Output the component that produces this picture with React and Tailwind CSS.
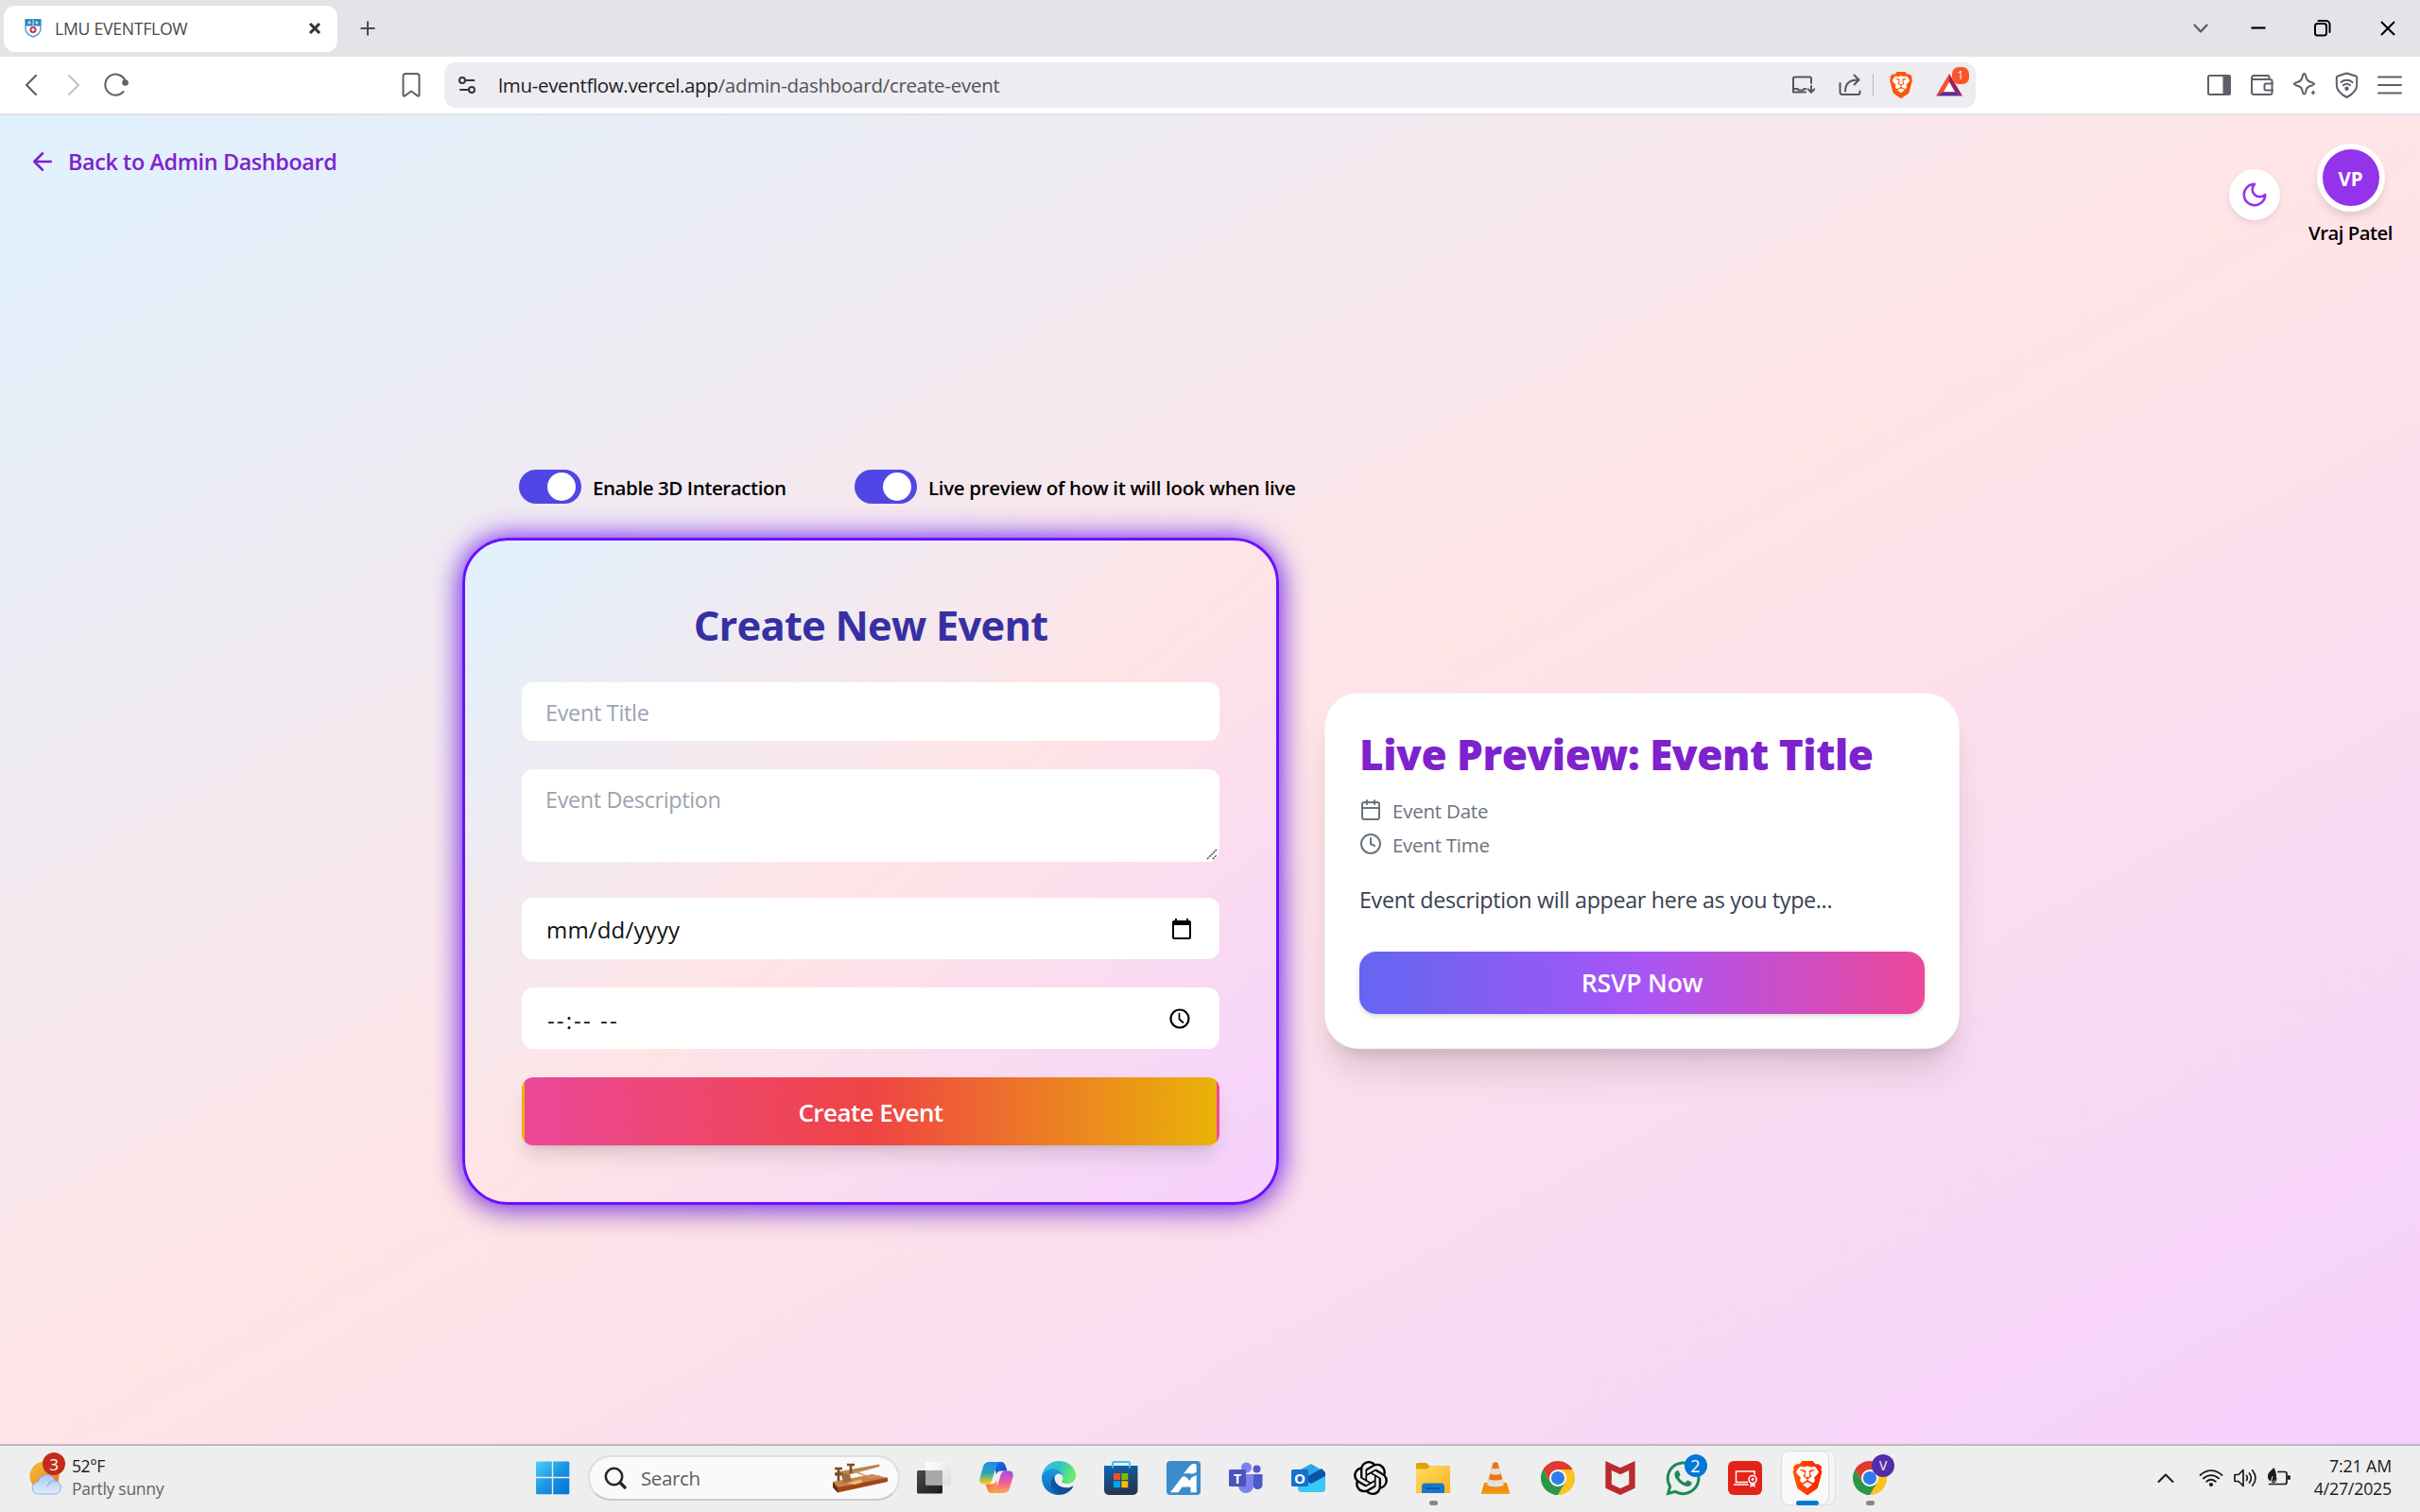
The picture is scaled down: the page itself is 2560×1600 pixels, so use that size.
import { SiBrave, SiOpenai, SiMcafee } from "react-icons/si";
import { FaWhatsapp } from "react-icons/fa";

function Svg({ w, h = w, vb, className = "", children }) {
  return (
    <svg width={w} height={h} viewBox={vb || `0 0 ${w} ${h}`} fill="none" className={`shrink-0 ${className}`}>
      {children}
    </svg>
  );
}

function Line({ w, h = w, vb, sw = 2, className = "", children }) {
  return (
    <svg width={w} height={h} viewBox={vb || `0 0 ${w} ${h}`} fill="none" stroke="currentColor" strokeWidth={sw} strokeLinecap="round" strokeLinejoin="round" className={`shrink-0 ${className}`}>
      {children}
    </svg>
  );
}

function BraveLion({ size, id, tile }) {
  return (
    <Svg w={size} vb="0 0 24 24">
      <defs>
        <linearGradient id={id} x1="0" y1="0" x2="1" y2="0">
          <stop offset="0" stopColor={tile ? "#ff5500" : "#fb5a12"} />
          <stop offset="1" stopColor={tile ? "#ff2000" : "#ff5000"} />
        </linearGradient>
      </defs>
      <path d="M5 5.5h14l-1 11-6 4.500-6-4.500z" fill="#fff" />
      <g fill={`url(#${id})`}>
        <SiBrave size={24} fill={`url(#${id})`} />
      </g>
    </Svg>
  );
}

function TitleBar() {
  return (
    <div className="flex h-[60px] items-center bg-[#e4e3e8] pl-[4px]">
      <div className="flex h-[49px] w-[353px] items-center rounded-[12px] bg-white pl-[22px]">
        <Svg w={18} h={20}>
          <path d="M1 .8h16v10c0 4-3.500 6.500-8 8.400C4.500 17.300 1 14.800 1 10.800z" fill="#fff" stroke="#4a9cc9" strokeWidth="1.400" />
          <path d="M1 .8h16v6.700H1z" fill="#2b86bd" />
          <path d="M5 2v4M3 4h4M12.800 2v4M10.800 4h4M9 1v6.500" stroke="#d9ecf7" strokeWidth="1" />
          <circle cx="9" cy="11.500" r="2.600" stroke="#cc2740" strokeWidth="1.800" />
        </Svg>
        <div className="ml-[14px] w-[268px] text-[17.6px] leading-[24px] tracking-[-0.0142em] text-[#46474c]">LMU EVENTFLOW</div>
        <Line w={14} sw={3} className="text-[#333438]"><path d="M2 2l10 10M12 2L2 12" strokeLinecap="butt" /></Line>
      </div>
      <Line w={18} sw={2} className="ml-[23px] text-[#4a4b50]"><path d="M9 1.500v15M1.500 9h15" strokeLinecap="butt" /></Line>
      <div className="ml-auto flex items-center pr-[24px] text-black">
        <Line w={18} h={12} sw={2.200} className="text-[#5a5c61]"><path d="M2.500 2.500l6.500 7 6.500-7" /></Line>
        <Line w={18} h={18} sw={2.200} className="ml-[43px] mr-[49px]"><path d="M1.500 8.500h15" strokeLinecap="butt" /></Line>
        <Line w={20} sw={2}><rect x="2" y="5" width="12" height="12.500" rx="2.500" /><path d="M5.500 2h8a4 4 0 0 1 4 4v8" /></Line>
        <Line w={20} sw={2} className="ml-[49px]"><path d="M3 3l14 14M17 3L3 17" strokeLinecap="butt" /></Line>
      </div>
    </div>
  );
}

function Toolbar() {
  return (
    <div className="flex h-[62px] items-center border-b-2 border-[#e2e1e6] bg-white text-[#5d6067]">
      <Line w={16} h={26} sw={2.200} className="ml-[25px]"><path d="M13 3L3 13l10 10" /></Line>
      <Line w={16} h={26} sw={2.200} className="ml-[29px] text-[#c3c4c8]"><path d="M3 3l10 10L3 23" /></Line>
      <Line w={30} sw={2} className="ml-[22px]">
        <path d="M24.500 10.500A11 11 0 1 0 22.500 22" />
        <circle cx="24.500" cy="12.500" r="2.300" fill="currentColor" />
      </Line>
      <Line w={22} h={28} sw={2} className="ml-[286px]"><path d="M5 2h12a2.500 2.500 0 0 1 2.500 2.500v20c0 1-1 1.500-1.800.9L11 20.500l-6.700 4.900c-.8.600-1.800.100-1.800-.9v-20A2.500 2.500 0 0 1 5 2z" /></Line>

      <div className="ml-[24px] flex h-[48px] w-[1620px] items-center rounded-[12px] bg-[#edecf1]">
        <Line w={20} h={20} sw={2} className="ml-[14px] text-[#33343a]">
          <circle cx="5" cy="5" r="3" /><path d="M9.500 5h8" /><circle cx="15" cy="15" r="3" /><path d="M3 15h8" />
        </Line>
        <div className="ml-[23px] text-[20.5px] leading-[30px] text-[#51525a]">
          <span className="tracking-[-0.0165em] text-[#1b1b22]">lmu-eventflow.vercel.app</span>
          <span className="tracking-[-0.0125em]">/admin-dashboard/create-event</span>
        </div>
        <div className="ml-auto flex items-center pr-[7px] text-[#55575e]">
          <Line w={28} h={24} sw={2}>
            <path d="M23 10V5a1.500 1.500 0 0 0-1.500-1.500h-16A1.500 1.500 0 0 0 4 5v14.500h13" />
            <path d="M4 16h4.500l1.500 1.500h4l1.500-1.500h2M23 13v6.500M19.800 16.500l3.200 3.200 3.200-3.200" />
          </Line>
          <Line w={28} h={28} sw={2} className="ml-[22px]">
            <path d="M3.500 12v9.500a2.500 2.500 0 0 0 2.500 2.500h16.500a2 2 0 0 0 2-2v-1.500" />
            <path d="M9 20.500c0-7.500 4-12 13.500-12M18.500 3.500l5 5-5 5" />
          </Line>
          <div className="ml-[10px] h-[24px] w-[1.5px] bg-[#b9b9c0]" />
          <div className="ml-[15px]"><BraveLion size={28} id="lionBar" /></div>
          <div className="relative ml-[22px] mr-[6px]">
            <Svg w={30} h={26}>
              <path d="M15 1L1 24.500l8-4L15 10z" fill="#ff4b2a" />
              <path d="M15 1l14 23.500-8-4L15 10z" fill="#9e1f63" />
              <path d="M1 24.500h28l-8-4.500H9z" fill="#5f2d91" />
              <path d="M15 10l6 10.300H9z" fill="#fff" />
            </Svg>
            <div className="absolute left-[18px] top-[-6px] flex h-[18px] w-[18px] items-center justify-center rounded-[7px] bg-[#fb542b] text-[12px] leading-none text-white">1</div>
          </div>
        </div>
      </div>

      <div className="ml-auto flex items-center gap-[15px] pr-[17px]">
        <Line w={30} h={28} sw={2}><rect x="3" y="4" width="23" height="20" rx="1.500" /><path d="M19.500 4.500h6v19h-6z" fill="currentColor" /></Line>
        <Line w={30} h={28} sw={2}>
          <path d="M4 7v14.500A2.500 2.500 0 0 0 6.500 24h17a2 2 0 0 0 2-2V10a2 2 0 0 0-2-2H5.500A1.500 1.500 0 0 1 4 6.500 2.500 2.500 0 0 1 6.500 4H21a1.500 1.500 0 0 1 1.500 1.500V8" />
          <path d="M26 12.500h-7a1.500 1.500 0 0 0-1.500 1.500v4a1.500 1.500 0 0 0 1.500 1.500h7" />
        </Line>
        <Line w={30} h={30} sw={2}>
          <path d="M14.500 3c.9 0 1.200.7 1.400 1.500.9 4.900 2.100 6.500 7.100 7.900 1 .300 2.100.600 2.100 1.400s-1.200 1.100-2.100 1.400c-5 1.400-6.200 2.900-7.100 7.800-.2.900-.5 1.500-1.400 1.500s-1.200-.6-1.400-1.500c-.9-4.900-2.100-6.400-7.100-7.800-1-.3-2.100-.6-2.100-1.400s1.200-1.100 2.100-1.400c5-1.400 6.200-3 7.100-7.900.2-.8.5-1.500 1.400-1.500z" />
          <path d="M24 18.500l1.400 3.100 3.100 1.400-3.100 1.400-1.400 3.100-1.400-3.100-3.100-1.400 3.100-1.400z" fill="currentColor" strokeWidth="1.200" stroke="#fff" />
        </Line>
        <Line w={30} h={30} sw={2}>
          <path d="M14.500 2.500l9.500 3c.8.300 1.200.8 1.200 1.500v8c0 5.500-4 9.500-10.700 13C7.800 24.500 3.800 20.500 3.800 15V7c0-.700.400-1.200 1.200-1.500z" />
          <path d="M8.500 12c3.500-3 8.500-3 12 0M10.800 15.300c2.300-1.900 5-1.900 7.400 0" /><circle cx="14.500" cy="18.800" r="1.200" fill="currentColor" />
        </Line>
        <Line w={30} h={24} sw={2}><path d="M3 3.500h24M3 12h24M3 20.500h24" /></Line>
      </div>
    </div>
  );
}

function PageHeader() {
  return (
    <header className="flex h-[139px] items-start justify-between pl-[30px] pr-[28px] pt-[30px]">
      <div className="flex h-[38px] items-center text-[#7e22ce]">
        <Line w={30} vb="0 0 24 24"><path d="M12 19l-7-7 7-7M19 12H5" /></Line>
        <div className="ml-[12px] text-[23.3px] font-semibold leading-[36px] tracking-[-0.015em]">Back to Admin Dashboard</div>
      </div>
      <div className="flex items-center gap-[29px]">
        <div className="mb-[2px] flex h-[54px] w-[54px] items-center justify-center rounded-full bg-white text-[#9333ea] shadow-[0_3px_6px_rgba(0,0,0,0.09)]">
          <Line w={30} vb="0 0 24 24"><path d="M12 3a6 6 0 0 0 9 9 9 9 0 1 1-9-9Z" /></Line>
        </div>
        <div className="flex w-[91px] flex-col items-center">
          <div className="flex h-[72px] w-[72px] items-center justify-center rounded-full border-6 border-white bg-[#9333ea] pt-[2px] text-[20.5px] font-bold leading-none text-white shadow-[0_6px_9px_-1px_rgba(0,0,0,0.12)]">VP</div>
          <div className="mt-[7px] whitespace-nowrap text-[20.3px] font-semibold leading-[30px] tracking-[-0.023em] text-black">Vraj Patel</div>
        </div>
      </div>
    </header>
  );
}

function Toggle({ label, className, labelClass }) {
  return (
    <div className={`flex items-center ${className}`}>
      <div className="flex h-[36px] w-[66px] items-center justify-end rounded-full bg-[#4f46e5] pr-[6px]">
        <div className="h-[30px] w-[30px] rounded-full bg-white" />
      </div>
      <div className={`ml-[12px] whitespace-nowrap pt-[1px] text-[20.5px] font-semibold leading-[30px] text-black ${labelClass}`}>{label}</div>
    </div>
  );
}

function EventForm() {
  return (
    <form className="h-[706px] w-[864px] rounded-[48px] border-3 border-[#6a11ff] bg-[linear-gradient(to_bottom_right,#e0f2fe,#ffe4e6,#f5d0fe)] bg-origin-border p-[60px] shadow-[0_0_30px_#6a11fb,0_12px_30px_rgba(0,0,0,0.14)]">
      <h1 className="mb-[32px] h-[58px] pt-[1px] text-center text-[43.5px] font-bold leading-[57px] tracking-[-0.018em] text-[#3730a3]">Create New Event</h1>
      <input placeholder="Event Title" className="block h-[62px] w-full rounded-[12px] bg-white pl-[25px] pr-[24px] pt-[1px] text-[23.4px] tracking-[-0.0125em] placeholder:text-[#9ca3af]" />
      <div className="relative mt-[30px] h-[98px]">
        <textarea placeholder="Event Description" className="block h-full w-full resize-none rounded-[12px] bg-white pl-[25px] pr-[24px] pt-[14px] text-[23.4px] leading-[36px] tracking-[-0.015em] placeholder:text-[#9ca3af]" />
        <Line w={14} sw={1.400} className="absolute bottom-[1px] right-[1px] text-[#44464c]"><path d="M2 12L12 2M8 12l4-4" strokeDasharray="2.200 .8" strokeLinecap="butt" /></Line>
      </div>
      <div className="mt-[38px] flex h-[65px] items-center justify-between rounded-[12px] bg-white pl-[26px] pr-[28px] text-[24px] text-[#111]">
        <div className="pt-[2px] leading-[36px] tracking-[0.007em]">mm/dd/yyyy</div>
        <Svg w={24} vb="0 0 24 24" className="text-black"><path fill="currentColor" d="M20 3h-1V1h-2v2H7V1H5v2H4c-1.100 0-2 .9-2 2v16c0 1.100.9 2 2 2h16c1.100 0 2-.9 2-2V5c0-1.100-.9-2-2-2zm0 18H4V8h16v13z" /></Svg>
      </div>
      <div className="mt-[30px] flex h-[65px] items-center justify-between rounded-[12px] bg-white pl-[27px] pr-[30px] text-[24px] text-[#111]">
        <div className="pt-[4px] leading-[36px] tracking-[0.088em]">--:-- --</div>
        <Line w={24} sw={2.200} className="text-black"><circle cx="12" cy="12" r="9.500" /><path d="M11.500 6.500v6l4 3.500" strokeWidth="1.700" /></Line>
      </div>
      <button type="button" className="mt-[30px] block h-[72px] w-full rounded-[12px] border-3 border-transparent bg-[linear-gradient(to_right,#ec4899,#ef4444,#eab308)] pt-[2px] text-center text-[26px] font-semibold leading-[64px] tracking-[-0.022em] text-white shadow-[0_15px_22px_-4px_rgba(0,0,0,0.12),0_6px_9px_-6px_rgba(0,0,0,0.12)]">Create Event</button>
    </form>
  );
}

function Preview() {
  return (
    <section className="mb-[2px] flex h-[377px] w-[672px] flex-col rounded-[36px] border-[1.5px] border-[#f3f4f6] bg-white px-[36px] pt-[36px] shadow-[0_30px_37px_-7px_rgba(0,0,0,0.12),0_12px_15px_-9px_rgba(0,0,0,0.12)]">
      <h2 className="whitespace-nowrap pt-[1px] text-[44px] font-extrabold leading-[54px] tracking-[-0.0105em] text-[#7e22ce]">Live Preview: Event Title</h2>
      <div className="mt-[17px] flex h-[30px] items-center gap-[11px] text-[#6b7280]">
        <Line w={24} vb="0 0 24 24"><path d="M8 2v4M16 2v4M3 10h18" /><rect x="3" y="4" width="18" height="18" rx="2" /></Line>
        <div className="pt-[3px] text-[20.5px] leading-[30px] tracking-[-0.011em]">Event Date</div>
      </div>
      <div className="mt-[6px] flex h-[30px] items-center gap-[11px] text-[#6b7280]">
        <Line w={24} vb="0 0 24 24"><circle cx="12" cy="12" r="10" /><path d="M12 6v6l4 2" /></Line>
        <div className="pt-[3px] text-[20.5px] leading-[30px] tracking-[-0.013em]">Event Time</div>
      </div>
      <p className="mt-[26px] whitespace-nowrap text-[23.3px] leading-[36px] tracking-[-0.0145em] text-[#374151]">Event description will appear here as you type...</p>
      <button type="button" className="mt-[37px] h-[66px] shrink-0 rounded-[18px] bg-[linear-gradient(to_right,#6366f1,#a855f7,#ec4899)] pt-[2px] text-[26.6px] font-semibold tracking-[-0.008em] text-white shadow-[0_2px_5px_rgba(0,0,0,0.16)]">RSVP Now</button>
    </section>
  );
}

function Cell({ children, running, active }) {
  return (
    <div className="relative flex h-[58px] w-[66px] items-center justify-center">
      {active && <div className="absolute left-[12px] top-0 h-[58px] w-[51px] rounded-[8px] border border-[#dfdfdf] bg-[#f4f4f4]" />}
      {active && <div className="absolute left-[5px] top-0 h-[58px] w-[51px] rounded-[8px] border border-[#dcdcdc] bg-[#f9f9f9]" />}
      <div className="relative">{children}</div>
      {running && <div className="absolute bottom-0 h-[5px] w-[9px] rounded-full bg-[#868686]" />}
      {active && <div className="absolute bottom-0 left-[21px] h-[5px] w-[24px] rounded-full bg-[#0078d7]" />}
    </div>
  );
}

function Chrome() {
  return (
    <Svg w={36} vb="0 0 48 48">
      <path d="M24 12H44.780A24 24 0 0 0 3.220 12L13.610 30 24 24Z" fill="#df3a30" />
      <path d="M24 12H44.780A24 24 0 0 1 24 48L34.390 30 24 24Z" fill="#fdc31c" />
      <path d="M13.610 30 3.220 12A24 24 0 0 0 24 48L34.390 30 24 24Z" fill="#2b9746" />
      <circle cx="24" cy="24" r="12" fill="#fff" />
      <circle cx="24" cy="24" r="9.500" fill="#2f7ded" />
    </Svg>
  );
}

function Gradient({ id, from, mid, to, x2 = 1, y2 = 1 }) {
  return (
    <linearGradient id={id} x1="0" y1="0" x2={x2} y2={y2}>
      <stop offset="0" stopColor={from} />
      {mid && <stop offset=".5" stopColor={mid} />}
      <stop offset="1" stopColor={to} />
    </linearGradient>
  );
}

function WeatherWidget() {
  return (
    <div className="flex w-[567px] items-center pl-[31px]">
      <div className="relative">
        <Svg w={36} h={36}>
          <defs>
            <Gradient id="sun" from="#eec33a" mid="#f09a2a" to="#f2650c" />
            <Gradient id="cloud" from="#a9c7f5" mid="#c4daf8" to="#e2eefb" x2={0} />
          </defs>
          <circle cx="16" cy="16" r="15.500" fill="url(#sun)" />
          <path d="M10 35a6.500 6.500 0 0 1-.8-13 9.500 9.500 0 0 1 18.300-1A7.200 7.200 0 0 1 28 35z" fill="url(#cloud)" stroke="#7ba0e4" strokeWidth=".8" />
          <path d="M19 27a8 8 0 0 1 9-6" stroke="#8fb0ea" strokeWidth="1.200" />
        </Svg>
        <div className="absolute left-[14px] top-[-9px] flex h-[24px] w-[24px] items-center justify-center rounded-full bg-[#c42b1c] text-[17px] leading-none text-white">3</div>
      </div>
      <div className="mb-[2px] ml-[9px]">
        <div className="text-[17.5px] leading-[24px] tracking-[-0.025em] text-[#1b1b1b]">52°F</div>
        <div className="text-[17.5px] leading-[24px] tracking-[-0.0165em] text-[#636363]">Partly sunny</div>
      </div>
    </div>
  );
}

function SearchBox() {
  return (
    <div className="ml-[19px] mr-[3px] flex h-[48px] w-[330px] items-center rounded-full border-2 border-[#dedede] border-b-[#c9c9c9] bg-[#fafafa] pl-[15px]">
      <Line w={24} sw={2.600} className="text-[#262626]"><circle cx="10.500" cy="10.500" r="8.700" /><path d="M17 17l5 5" strokeWidth="3.200" /></Line>
      <div className="ml-[15px] text-[20.5px] leading-[30px] tracking-[-0.018em] text-[#5d5d5d]">Search</div>
      <Svg w={60} h={32} className="ml-auto mr-[10px]">
        <path d="M1 20l42-8 16 4-53 11z" fill="#c98348" />
        <path d="M1 20l5 6v5.500L1 26z" fill="#6e2410" />
        <path d="M6 26l53-10.500v4.500L6 31.500z" fill="#a4441c" />
        <path d="M16 21.500l14-4 3 3-9 2.500z" fill="#e8bd74" />
        <path d="M3 10L50 1.500l.5 2.500L20 12 4 14z" fill="#b98350" />
        <path d="M3 6h8M16 2h8M7 6v13M20 3v8M3 12h9" stroke="#7b4b27" strokeWidth="2.600" />
        <path d="M10 12h9l2 8-9 1z" fill="#a06c3c" />
        <path d="M24 9l15 6 12-1" stroke="#c99a5c" strokeWidth="1.500" />
      </Svg>
    </div>
  );
}

function Taskbar() {
  return (
    <footer className="flex h-[72px] items-center border-t-2 border-[#bdbabd] bg-[#eeeeee] pb-[2px]">
      <WeatherWidget />
      <Svg w={36}>
        <defs><linearGradient id="win" gradientUnits="userSpaceOnUse" x1="0" y1="0" x2="36" y2="36"><stop offset="0" stopColor="#4fd0ff" /><stop offset=".5" stopColor="#1a94e0" /><stop offset="1" stopColor="#0072d0" /></linearGradient></defs>
        <path d="M1 .5h15.800v16.300H0V1.500zM18.200.5H34.500l.8 1v15.300H18.200zM0 18.300h16.800v17H1l-1-1zM18.200 18.300h17.100v16l-1 1H18.200z" fill="url(#win)" />
      </Svg>
      <SearchBox />

      <Cell>
        <Svg w={36}>
          <defs><Gradient id="tvd" from="#4a4a4a" to="#1b1b1b" /><Gradient id="tvl" from="#ffffff" to="#dcdcdc" /></defs>
          <rect x="0" y="10" width="27" height="24.500" rx="1.500" fill="url(#tvd)" />
          <rect x="9" y="1" width="27" height="24.500" rx="1.500" fill="url(#tvl)" />
          <path d="M9 10h18v15.500H10.500L9 24z" fill="#a9a9a9" />
        </Svg>
      </Cell>
      <Cell>
        <Svg w={36}>
          <defs>
            <Gradient id="cpa" from="#1d8cf0" mid="#2aa5b8" to="#ffd30f" x2={0} />
            <Gradient id="cpb" from="#a14df0" mid="#ef5a9a" to="#ffab4c" x2={0} />
            <Gradient id="cpc" from="#1e7cf2" to="#1338b8" />
            <Gradient id="cpd" from="#ff5b3a" to="#ffb04a" />
          </defs>
          <path d="M15 1h8c3 0 4 2 5 5l1.500 4.500H23c-3 0-4 1-5 4z" fill="url(#cpc)" />
          <path d="M21 34h-8c-3 0-4-2-5-5l-1.500-4.500H13c3 0 4-1 5-4z" fill="url(#cpd)" />
          <path d="M11 1h11c-3 0-3.500 3-4.500 6l-4 13c-1 3-2.500 4.500-5.500 4.500H4.500C1 24.500-.5 22 .5 18L4 6c1-3.500 3.500-5 7-5z" fill="url(#cpa)" />
          <path d="M25 34H14c3 0 3.500-3 4.500-6l4-13c1-3 2.500-4.500 5.500-4.500h3.500c3.500 0 5 2.500 4 6.500L32 29c-1 3.500-3.500 5-7 5z" fill="url(#cpb)" />
        </Svg>
      </Cell>
      <Cell>
        <Svg w={36} vb="0 0 256 256">
          <defs>
            <Gradient id="ed1" from="#0c59a4" to="#114a8b" x2={1} y2={0} />
            <Gradient id="ed2" from="#1b9de2" to="#0a66c0" x2={0} />
            <Gradient id="ed3" from="#35c1f1" mid="#2fc2c9" to="#66eb6e" x2={1} y2={.35} />
          </defs>
          <path fill="url(#ed1)" d="M230.960 190.050a93.910 93.910 0 0 1-10.540 4.710 101.870 101.870 0 0 1-35.900 6.460c-47.320 0-88.540-32.550-88.540-74.320A31.480 31.480 0 0 1 112.410 99.630c-42.800 1.800-53.800 46.400-53.800 72.530 0 73.880 68.090 81.370 82.760 81.370 7.910 0 19.840-2.300 27-4.560l1.310-.44a128.340 128.340 0 0 0 66.600-52.800 4 4 0 0 0-5.320-5.680z" />
          <path fill="url(#ed2)" d="M105.730 241.420a79.200 79.200 0 0 1-22.740-21.340 80.720 80.720 0 0 1 29.530-120c3.120-1.470 8.450-4.130 15.540-4a32.350 32.350 0 0 1 25.690 13 31.880 31.880 0 0 1 6.360 18.660c0-.21 24.460-79.600-80-79.600-43.900 0-80 41.660-80 78.210a130.150 130.150 0 0 0 12.110 56 128 128 0 0 0 156.380 67.110 75.550 75.550 0 0 1-62.780-8z" />
          <path fill="url(#ed3)" d="M152.330 148.860c-.81 1.050-3.300 2.500-3.300 5.660 0 2.610 1.700 5.120 4.720 7.230 14.380 10 41.490 8.680 41.560 8.680a59.560 59.560 0 0 0 30.270-8.350 61.380 61.380 0 0 0 30.430-52.880c.26-22.410-8-37.310-11.340-43.910C223.460 23.840 177.720 0 128 0A128 128 0 0 0 0 126.200c.48-36.540 36.800-66.050 80-66.050 3.500 0 23.460.34 42 10.070 16.340 8.580 24.900 18.940 30.850 29.210 6.180 10.670 7.280 24.150 7.280 29.520 0 5.370-2.740 13.330-7.800 19.900z" />
        </Svg>
      </Cell>
      <Cell>
        <Svg w={36}>
          <defs><Gradient id="store" from="#0f68b4" to="#273452" x2={0.3} /></defs>
          <path d="M0 5h35.500v26a5 5 0 0 1-5 5H5a5 5 0 0 1-5-5z" fill="url(#store)" />
          <path d="M9 7.500V2.500A1.500 1.500 0 0 1 10.500 1h15A1.500 1.500 0 0 1 27 2.500v5" stroke="#35c5fb" strokeWidth="2" />
          <path d="M10 13h7v7h-7z" fill="#f25022" /><path d="M18.300 13h7v7h-7z" fill="#7fba00" />
          <path d="M10 21.200h7v7h-7z" fill="#00a4ef" /><path d="M18.300 21.200h7v7h-7z" fill="#ffb900" />
        </Svg>
      </Cell>
      <Cell>
        <Svg w={36}>
          <rect width="36" height="36" rx="4" fill="#3b8ccb" />
          <path d="M18 13.500L24.500 5.200Q26.500 3 29 3h1a1.700 1.700 0 0 1 1.700 1.700V12l-4.700 1.800q-4-1.500-9-.3z" fill="#fff" />
          <path d="M4 33.200L16 17.500q2-2 4.500-.5 3 2 3.500 4l-5 6.500h-2.500L12.500 33.200z" fill="#fff" />
          <path d="M24.500 20.500l2-3 5.200-2.500v18.200H25.500v-5.700H18l3-4z" fill="#fff" />
        </Svg>
      </Cell>
      <Cell>
        <Svg w={36}>
          <circle cx="18.500" cy="7" r="5.500" fill="#7b83eb" /><circle cx="29.500" cy="8.500" r="4" fill="#5059c9" />
          <path d="M24 14h11.500v10.500a5 5 0 0 1-10 1z" fill="#5059c9" />
          <path d="M10 14h16v12a8 8 0 0 1-16 0z" fill="#7b83eb" />
          <rect x="0" y="9" width="18" height="18" rx="1.500" fill="#4b53bc" />
          <text x="9" y="23.500" textAnchor="middle" fontSize="14" fontWeight="700" fill="#fff">T</text>
        </Svg>
      </Cell>
      <Cell>
        <Svg w={36}>
          <path d="M21 3l14 8.500L36 16 21 22 8 16v-6z" fill="#28a8ea" />
          <path d="M16 17L32 8l4 4v5l-18 10z" fill="#0a55ab" />
          <path d="M8 17l13 7 15-8v13a4 4 0 0 1-4 4H11a4 4 0 0 1-4-4z" fill="#38c8f5" />
          <rect x="0" y="9" width="18" height="18" rx="1.500" fill="#1372cf" />
          <text x="9" y="23.500" textAnchor="middle" fontSize="15" fontWeight="700" fill="#fff">O</text>
        </Svg>
      </Cell>
      <Cell><SiOpenai size={36} color="#000" /></Cell>
      <Cell running>
        <Svg w={36}>
          <defs><Gradient id="fold" from="#ffdb62" to="#f8b41c" /></defs>
          <path d="M0 3.500A1.500 1.500 0 0 1 1.500 2H11l3.500 3.500H36V12H0z" fill="#e3a008" />
          <path d="M0 8.500h12L15 5.500h21V34H0z" fill="url(#fold)" />
          <path d="M6 34v-7a3.500 3.500 0 0 1 3.500-3.500h17A3.500 3.500 0 0 1 30 27v7z" fill="#1478cc" />
          <path d="M10.500 29h14.500" stroke="#0b4a8c" strokeWidth="1.500" />
        </Svg>
      </Cell>
      <Cell>
        <Svg w={30} h={36}>
          <path d="M3 23h24l3 11a1 1 0 0 1-1 1H1a1 1 0 0 1-1-1z" fill="#f68b0c" />
          <path d="M0 32.500h30V35H0z" fill="#e9a21c" />
          <path d="M12.500 2c.5-1 4.500-1 5 0l6.500 23c.5 3-18.500 3-18 0z" fill="#ee7410" />
          <path d="M11 7.500c2 1 6 1 8 0l1.700 6c-3 1.400-8.400 1.400-11.400 0zM7.700 19c4 2 10.600 2 14.600 0l1.700 6.500c-4 2.500-14 2.500-18 0z" fill="#dfe1e2" />
        </Svg>
      </Cell>
      <Cell><Chrome /></Cell>
      <Cell><SiMcafee size={36} color="#bb2a2f" /></Cell>
      <Cell>
        <div className="flex h-[36px] items-center"><FaWhatsapp size={41} color="#1c8a56" /></div>
        <div className="absolute left-[22px] top-[-7px] flex h-[24px] w-[24px] items-center justify-center rounded-full bg-[#0078d7] text-[18px] leading-none text-white">2</div>
      </Cell>
      <Cell>
        <Svg w={36}>
          <rect width="36" height="36" rx="6" fill="#e2231a" />
          <path d="M8.500 20.500V11h19.500v3.500M6 25h15.500M8.500 20.500v2h12.500" stroke="#fff" strokeWidth="1.500" />
          <circle cx="26" cy="19.500" r="4" fill="#e2231a" stroke="#fff" strokeWidth="1.600" />
          <circle cx="26" cy="19.500" r="1.400" fill="#fff" />
          <path d="M23.500 23.500V28l2.500-1.500 2.500 1.500v-4.500" fill="#fff" />
        </Svg>
      </Cell>
      <Cell active><BraveLion size={36} id="lionTask" tile /></Cell>
      <Cell running>
        <Chrome />
        <div className="absolute left-[20px] top-[-7px] flex h-[24px] w-[24px] items-center justify-center rounded-full bg-[#512da8] text-[14px] font-semibold leading-none text-[#d8cbf2]">V</div>
      </Cell>

      <div className="ml-auto flex items-center pr-[30px] text-[#1b1b1b]">
        <Line w={20} h={12} sw={2}><path d="M2.500 10L10 2.500l7.500 7.500" /></Line>
        <Line w={26} h={20} sw={1.800} className="ml-[25px]">
          <path d="M1.500 7c7-6.500 16-6.500 23 0M4.800 10.500c5-4.500 11.400-4.500 16.400 0M8.200 13.800c3-2.600 6.600-2.600 9.600 0" />
          <circle cx="13" cy="17" r="1.200" fill="currentColor" />
        </Line>
        <Line w={26} h={22} sw={1.700} className="ml-[10px]">
          <path d="M2 7.500h4l5-5v17l-5-5H2zM14.500 8.500c1 1.500 1 3.500 0 5M17.500 6c2.300 3 2.300 7 0 10M20.800 3c4 5 4 11 0 16" />
        </Line>
        <Line w={28} h={24} sw={1.700} className="ml-[9px]">
          <path d="M13 5.500h7a2 2 0 0 1 2 2v9a2 2 0 0 1-2 2H3.500" />
          <path d="M23.500 10h1.500v3h-1.500z" fill="currentColor" />
          <path d="M8.500 1C5 4.500 2 6.500 2 10.500c0 3 2 5 4.500 5 3 0 4.500-2.500 4.500-5.500 0-3-1-6-2.500-9z" fill="currentColor" strokeWidth="0" />
          <path d="M2 18.500c2-1 4.500-4 5-8" stroke="#eee" strokeWidth="1" />
          <path d="M7 16.500c2 .5 3.500-1 4-4" strokeWidth="1.300" />
        </Line>
        <div className="mb-[2px] ml-[20px] w-[85px] text-right text-[17.8px] leading-[24px]">
          <div className="tracking-[-0.008em]">7:21 AM</div>
          <div className="tracking-[-0.012em]">4/27/2025</div>
        </div>
      </div>
    </footer>
  );
}

export default function App() {
  return (
    <div className="flex h-[1600px] w-[2560px] flex-col overflow-hidden font-['Open_Sans','Noto_Sans',sans-serif]">
      <TitleBar />
      <Toolbar />
      <main className="h-[1406px] bg-[linear-gradient(to_bottom_right,#e0f2fe,#ffe4e6,#f5d0fe)]">
        <PageHeader />
        <div className="ml-[489px] mt-[236px]">
          <div className="flex h-[36px] items-center pl-[60px]">
            <Toggle label="Enable 3D Interaction" className="w-[355px]" labelClass="tracking-[-0.0205em]" />
            <Toggle label="Live preview of how it will look when live" labelClass="tracking-[-0.0157em]" />
          </div>
          <div className="mt-[36px] flex items-center gap-[48px]">
            <EventForm />
            <Preview />
          </div>
        </div>
      </main>
      <Taskbar />
    </div>
  );
}
